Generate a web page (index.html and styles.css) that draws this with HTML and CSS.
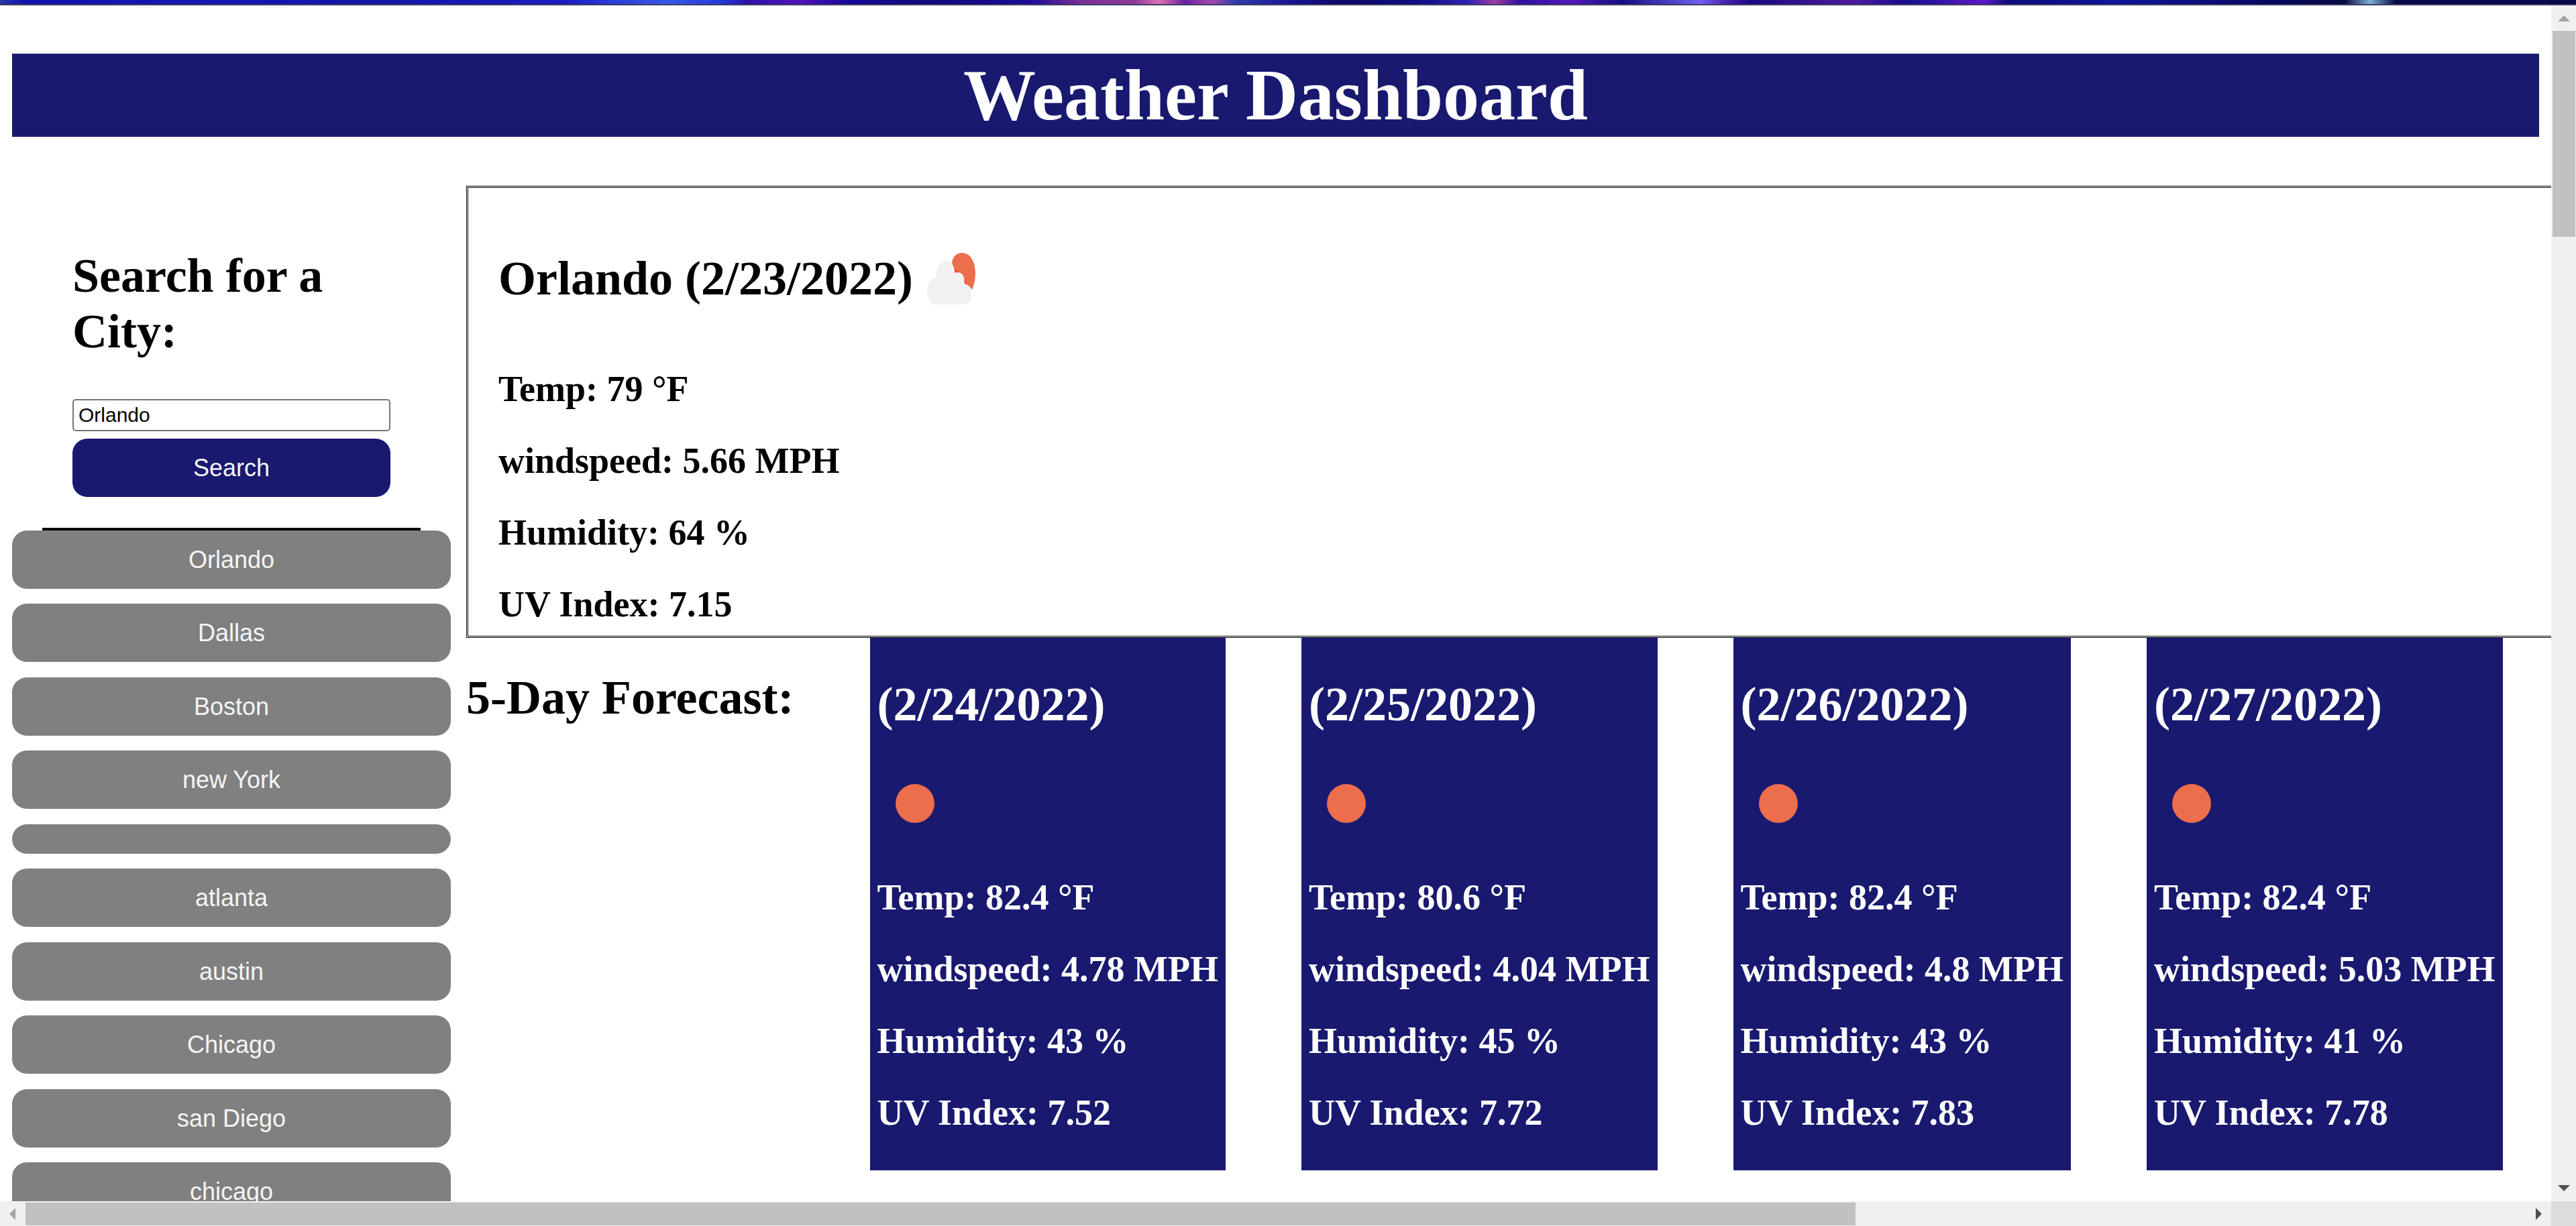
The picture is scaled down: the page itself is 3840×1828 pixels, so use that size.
FILE: index.html
```html
<!DOCTYPE html>
<html lang="en">
<head>
  <meta charset="utf-8">
  <meta name="viewport" content="width=device-width, initial-scale=1">
  <title>Weather Dashboard</title>
  <link rel="stylesheet" href="styles.css">
</head>
<body>
  <div class="top-strip"></div>
  <div class="viewport">
    <div class="page">
      <header class="page-header"><h1 class="title">Weather Dashboard</h1></header>
      <div class="columns">
        <aside class="sidebar">
          <form class="search">
            <h2 class="heading"><label for="city">Search for a City:</label></h2>
            <input class="search-input" id="city" type="text" value="Orlando">
            <button class="button search-button" type="button">Search</button>
          </form>
          <div class="history">
            <button class="button" type="button">Orlando</button>
            <button class="button" type="button">Dallas</button>
            <button class="button" type="button">Boston</button>
            <button class="button" type="button">new York</button>
            <button class="button button-empty" type="button"></button>
            <button class="button" type="button">atlanta</button>
            <button class="button" type="button">austin</button>
            <button class="button" type="button">Chicago</button>
            <button class="button" type="button">san Diego</button>
            <button class="button" type="button">chicago</button>
          </div>
        </aside>
        <main class="weather">
          <section class="current">
            <div class="current-head">
              <h2 class="heading">Orlando (2/23/2022)</h2>
              <svg class="icon" viewBox="0 0 112 112" aria-hidden="true">
                <path fill="#ec6e4c" d="M58 33C59 23 66 18 73 18C86 18 93 32 93 49C93 58 91 66 88 73C85 69 82 65 77 64C77 51 72 45 63 48C61 41 60 37 58 33Z"/>
                <path fill="#e2502e" d="M61 42L63 48C66 46 69 46 71 47C68 44 64 45 61 42ZM76 57L77 64L82 66C79 63 78 61 76 57Z"/>
                <path fill="#f1f1f1" d="M32 95C25 93 21 86 21 77C21 64 27 55 35 54C35 39 41 29 49 29C56 29 61 36 62 48C71 46 76 52 76 64C83 65 87 72 87 81C87 88 84 93 80 95Z"/>
              </svg>
            </div>
            <div class="stats">
              <h3 class="stat">Temp: 79 °F</h3>
              <h3 class="stat">windspeed: 5.66 MPH</h3>
              <h3 class="stat">Humidity: 64 %</h3>
              <h3 class="stat">UV Index: 7.15</h3>
            </div>
          </section>
          <section class="forecast">
            <h2 class="heading forecast-title">5-Day Forecast:</h2>
            <article class="card">
              <h2 class="heading">(2/24/2022)</h2>
              <svg class="icon" viewBox="0 0 112 112" aria-hidden="true"><circle cx="56" cy="56" r="29" fill="#ec6e4c"/></svg>
              <div class="stats">
                <h3 class="stat">Temp: 82.4 °F</h3>
                <h3 class="stat">windspeed: 4.78 MPH</h3>
                <h3 class="stat">Humidity: 43 %</h3>
                <h3 class="stat">UV Index: 7.52</h3>
              </div>
            </article>
            <article class="card">
              <h2 class="heading">(2/25/2022)</h2>
              <svg class="icon" viewBox="0 0 112 112" aria-hidden="true"><circle cx="56" cy="56" r="29" fill="#ec6e4c"/></svg>
              <div class="stats">
                <h3 class="stat">Temp: 80.6 °F</h3>
                <h3 class="stat">windspeed: 4.04 MPH</h3>
                <h3 class="stat">Humidity: 45 %</h3>
                <h3 class="stat">UV Index: 7.72</h3>
              </div>
            </article>
            <article class="card">
              <h2 class="heading">(2/26/2022)</h2>
              <svg class="icon" viewBox="0 0 112 112" aria-hidden="true"><circle cx="56" cy="56" r="29" fill="#ec6e4c"/></svg>
              <div class="stats">
                <h3 class="stat">Temp: 82.4 °F</h3>
                <h3 class="stat">windspeed: 4.8 MPH</h3>
                <h3 class="stat">Humidity: 43 %</h3>
                <h3 class="stat">UV Index: 7.83</h3>
              </div>
            </article>
            <article class="card">
              <h2 class="heading">(2/27/2022)</h2>
              <svg class="icon" viewBox="0 0 112 112" aria-hidden="true"><circle cx="56" cy="56" r="29" fill="#ec6e4c"/></svg>
              <div class="stats">
                <h3 class="stat">Temp: 82.4 °F</h3>
                <h3 class="stat">windspeed: 5.03 MPH</h3>
                <h3 class="stat">Humidity: 41 %</h3>
                <h3 class="stat">UV Index: 7.78</h3>
              </div>
            </article>
          </section>
        </main>
      </div>
    </div>
    <div class="bar bar-vertical" aria-hidden="true">
      <svg class="arrow arrow-off" viewBox="0 0 38 38"><path d="M19 15L28 24H10Z"/></svg>
      <div class="track"><div class="thumb"></div></div>
      <svg class="arrow" viewBox="0 0 38 38"><path d="M10 14H28L19 23Z"/></svg>
    </div>
    <div class="bar bar-horizontal" aria-hidden="true">
      <svg class="arrow arrow-off" viewBox="0 0 38 38"><path d="M23 10V28L14 19Z"/></svg>
      <div class="track"><div class="thumb"></div></div>
      <svg class="arrow" viewBox="0 0 38 38"><path d="M15 10V28L24 19Z"/></svg>
    </div>
    <div class="corner"></div>
  </div>
</body>
</html>
```
FILE: styles.css
```css
* {
  box-sizing: border-box;
}

body {
  margin: 0;
  height: 100vh;
  overflow: hidden;
  display: flex;
  flex-direction: column;
  background: #fff;
  color: #000;
  font-family: "Liberation Serif", "Times New Roman", serif;
}

h1,
h2,
h3 {
  margin: 0;
  font-weight: bold;
}

.top-strip {
  flex: none;
  height: 8px;
  border-bottom: 2px solid #3c3c62;
  background: linear-gradient(90deg,
    #2a38a8 0%, #1212ac 1%, #1416b4 7%, #1414a8 15%, #1a1cc0 22%,
    #2c40dc 24%, #3858e4 26%, #2438dc 28%, #2a10a8 29%, #5410b8 31%,
    #14089a 33%, #100878 36%, #1c0a98 40%, #7c3098 42%, #903898 44%,
    #e070b8 45%, #6820a0 46%, #a848b0 47%, #303ca8 48%, #1a1494 50%,
    #0c0868 52%, #100c80 55%, #3020b8 57%, #a03ca0 58%, #3010a0 59%,
    #5418b8 61%, #140c80 63%, #7060f0 66%, #4820b0 67%, #180a80 68%,
    #5018a0 72%, #140c8c 74%, #6018c8 77%, #0c0c78 78%, #10149c 82%,
    #080860 88%, #060840 91%, #7cb0d0 92%, #060848 93%, #080850 96%,
    #060648 100%);
}

.viewport {
  flex: 1;
  min-height: 0;
  display: grid;
  grid-template-columns: minmax(0, 1fr) 37px;
  grid-template-rows: minmax(0, 1fr) 37px;
}

.page {
  overflow: hidden;
  padding: 72px 0 0 18px;
}

.page-header {
  margin: 0 18px 73px 0;
  background: #191970;
  color: #fff;
  text-align: center;
}

.title {
  font-size: 108px;
  line-height: 124px;
}

.heading {
  font-size: 72px;
  line-height: 83px;
}

.columns {
  display: flex;
  align-items: flex-start;
  gap: 23px;
}

.sidebar {
  flex: none;
  width: 654px;
}

.search {
  margin: 0 45px;
  padding: 93px 45px 46px;
  display: flex;
  flex-direction: column;
  border-bottom: 4px solid #000;
}

.search-input {
  width: 100%;
  height: 48px;
  margin: 59px 0 11px;
  padding: 0 7px;
  border: 2px solid #767676;
  border-radius: 5px;
  background: #fff;
  color: #000;
  font: 30px "Liberation Sans", Arial, sans-serif;
}

.button {
  width: 100%;
  height: 87px;
  padding: 0;
  border: 0;
  border-radius: 22px;
  background: #808080;
  color: #f5f5f5;
  font: 36px "Liberation Sans", Arial, sans-serif;
}

.search-button {
  background: #191970;
}

.history {
  display: flex;
  flex-direction: column;
}

.history .button {
  margin-bottom: 22px;
}

.history .button:nth-child(even) {
  margin-bottom: 23px;
}

.history .button-empty {
  height: 44px;
}

.weather {
  flex: 1;
  min-width: 0;
}

.current {
  padding: 79px 45px 16px;
  border: 3px double #000;
  border-right: 0;
}

.current-head {
  display: flex;
  align-items: center;
  margin-bottom: 78px;
}

.icon {
  display: block;
  flex: none;
  width: 112px;
  height: 112px;
}

.stats {
  display: flex;
  flex-direction: column;
  gap: 45px;
}

.stat {
  font-size: 54px;
  line-height: 62px;
}

.forecast {
  display: flex;
  align-items: flex-start;
  gap: 113px;
  white-space: nowrap;
}

.forecast-title {
  margin-top: 48px;
}

.card {
  padding: 58px 11px 55px;
  background: #191970;
  color: #fff;
}

.card .icon {
  margin: 50px 0 53px;
}

.bar {
  display: flex;
  background: #f0f0f0;
}

.bar-vertical {
  flex-direction: column;
}

.arrow {
  flex: none;
  width: 38px;
  height: 38px;
  fill: #505050;
}

.arrow-off {
  fill: #a3a3a3;
}

.track {
  flex: 1;
  display: flex;
}

.thumb {
  background: #c1c1c1;
}

.bar-vertical .thumb {
  width: 34px;
  height: 18%;
  margin-left: 2px;
}

.bar-horizontal .thumb {
  width: 73.2%;
  height: 34px;
  margin-top: 2px;
}

.corner {
  background: #dcdcdc;
}
```
